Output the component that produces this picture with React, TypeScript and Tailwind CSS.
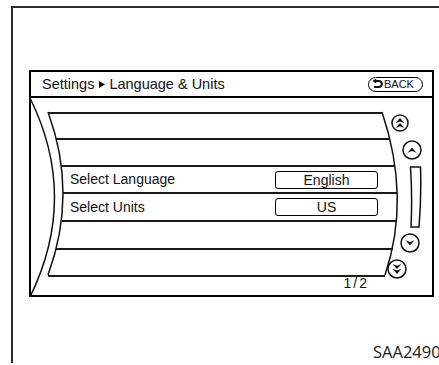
import type { ReactNode } from 'react'

// Navigation screen "Settings ▸ Language & Units" — manual line-art style.

type Row = { cls: string; label?: string; value?: string; labelCls?: string }

const rows: Row[] = [
  { cls: 'ml-[17px] mr-[17px] h-[26px]' },
  { cls: 'ml-[25px] mr-[10px] h-[27px]' },
  { cls: 'ml-[30px] mr-[4px] h-[27px]', label: 'Select Language', value: 'English', labelCls: 'w-[214px] pl-[9px]' },
  { cls: 'ml-[32px] mr-[2px] h-[28px]', label: 'Select Units', value: 'US', labelCls: 'w-[212px] pl-[7px]' },
  { cls: 'ml-[31px] mr-[2px] h-[28px]' },
  { cls: 'ml-[25px] mr-[6px] h-[27px]' },
]

function Arrow({ dir, double }: { dir: 'up' | 'down'; double?: boolean }) {
  // notched arrowhead, pointing up; flipped for down
  const head = 'M-4.4 2.4 L0 -2.8 L4.4 2.4 L0 0.6 Z'
  return (
    <g transform={dir === 'down' ? 'rotate(180)' : undefined}>
      {double ? (
        <>
          <path d={head} transform="translate(0 -2.2)" fill="#111" />
          <path d={head} transform="translate(0 2.7)" fill="#111" />
        </>
      ) : (
        <path d={head} transform="translate(0 0.4)" fill="#111" />
      )}
    </g>
  )
}

function RoundButton({ size, className, children }: { size: number; className: string; children: ReactNode }) {
  const r = size / 2
  return (
    <svg width={size} height={size} viewBox={`${-r} ${-r} ${size} ${size}`} className={`shrink-0 ${className}`}>
      <circle r={r - 1} fill="white" stroke="#111" strokeWidth={1.5} />
      {children}
    </svg>
  )
}

export default function App() {
  return (
    <div className="h-[365px] w-[439px] overflow-hidden bg-white font-['Liberation_Sans',Arial,sans-serif] text-[#111]">
      <div className="ml-[11px] mt-[6px] h-[357px] border-l-2 border-t-2 border-[#2b2b2b] pl-[16px] pt-[62px]">
        <div className="flex h-[227px] w-[405px] flex-col border-2 border-black">
          {/* header */}
          <div className="flex h-[26px] shrink-0 items-center justify-between border-b-2 border-black pl-[11px] pr-[9px]">
            <div className="flex items-center text-[14.5px] leading-none">
              <span>Settings</span>
              <svg width="6" height="7" viewBox="0 0 6 7" className="ml-[5px] mr-[4px]">
                <path d="M0 0 L6 3.5 L0 7 Z" fill="#111" />
              </svg>
              <span>Language &amp; Units</span>
            </div>
            <div className="flex h-[15px] w-[55px] items-center gap-[1px] rounded-full border-[1.5px] border-black pl-[3px] text-[11px] leading-none">
              <svg width="11" height="10" viewBox="0 0 11 10">
                <path d="M3.5 2 H6.8 A3 3 0 0 1 6.8 8 H2" fill="none" stroke="#111" strokeWidth="2" />
                <path d="M0.5 2 L4.2 -0.6 L4.2 4.6 Z" fill="#111" />
              </svg>
              <span>BACK</span>
            </div>
          </div>

          {/* drum list */}
          <div className="relative flex flex-1">
            <svg
              width="401"
              height="197"
              viewBox="0 0 401 197"
              className="pointer-events-none absolute left-0 top-0 overflow-visible"
            >
              <g fill="none" stroke="#111" strokeWidth="1.5">
                <path d="M-1 0 Q48 99 -1 199" />
                <path d="M17 14 Q47 95.5 17 177" />
                <path d="M351 14 Q380 100 354 177" />
              </g>
            </svg>

            <div className="flex w-[368px] flex-col pt-[14px]">
              {rows.map((row, i) => (
                <div key={i} className={`flex items-center border-t-2 border-[#1a1a1a] ${row.cls}`}>
                  {row.label && (
                    <>
                      <span className={`shrink-0 text-[14px] ${row.labelCls}`}>{row.label}</span>
                      <div className="flex h-[18px] w-[103px] items-center justify-center rounded-[3px] border-[1.5px] border-black text-[14px] leading-none">
                        {row.value}
                      </div>
                    </>
                  )}
                </div>
              ))}
              <div className="ml-[17px] mr-[14px] border-t-2 border-[#1a1a1a]" />
              <div className="mr-[30px] text-right text-[14px] leading-[13px] tracking-[2px]">1/2</div>
            </div>

            {/* scroll controls */}
            <div className="flex w-[33px] flex-col items-start">
              <RoundButton size={18} className="-ml-[8px] mt-[16px]">
                <Arrow dir="up" double />
              </RoundButton>
              <RoundButton size={20} className="ml-[3px] mt-[8px]">
                <Arrow dir="up" />
              </RoundButton>
              <svg width="14" height="62" viewBox="0 0 14 62" className="ml-[9px] mt-[6px]">
                <path
                  d="M2.5 1 L12.5 1 Q13.5 32 11 61 L3 61 Q4.5 31 2.5 1 Z"
                  fill="white"
                  stroke="#111"
                  strokeWidth="1.5"
                />
              </svg>
              <RoundButton size={20} className="ml-[1px] mt-[5px]">
                <Arrow dir="down" />
              </RoundButton>
              <RoundButton size={20} className="-ml-[12px] mt-[6px]">
                <Arrow dir="down" double />
              </RoundButton>
            </div>
          </div>
        </div>

        <div className="ml-[344px] mt-[45px] whitespace-nowrap font-['Open_Sans',sans-serif] text-[16.5px] font-medium leading-[20px] text-[#1a1a1a]">
          SAA2490
        </div>
      </div>
    </div>
  )
}
